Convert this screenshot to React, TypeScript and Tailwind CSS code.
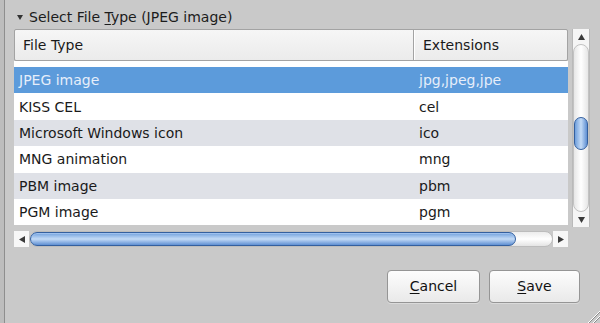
import React from 'react'

const rows: { name: string; ext: string }[] = [
  { name: 'JPEG image', ext: 'jpg,jpeg,jpe' },
  { name: 'KISS CEL', ext: 'cel' },
  { name: 'Microsoft Windows icon', ext: 'ico' },
  { name: 'MNG animation', ext: 'mng' },
  { name: 'PBM image', ext: 'pbm' },
  { name: 'PGM image', ext: 'pgm' },
]

function Arrow({ dir }: { dir: 'up' | 'down' | 'left' | 'right' }) {
  const pts = {
    up: '0,6 3.5,0 7,6',
    down: '0,0 3.5,6 7,0',
    left: '6,0 0,3.5 6,7',
    right: '0,0 6,3.5 0,7',
  }[dir]
  const horiz = dir === 'left' || dir === 'right'
  return (
    <svg width={horiz ? 6 : 7} height={horiz ? 7 : 6} viewBox={horiz ? '0 0 6 7' : '0 0 7 6'}>
      <polygon points={pts} fill="#3a3a3a" />
    </svg>
  )
}

function Button({ mnemonic, rest, width }: { mnemonic: string; rest: string; width: string }) {
  return (
    <button
      className={`${width} h-[33px] rounded-[4px] border border-[#959595] bg-gradient-to-b from-[#fdfdfd] to-[#e9e9e9] shadow-[0_1px_0_#dadada] text-[14px] text-[#111] flex items-center justify-center`}
    >
      <span className="underline underline-offset-2">{mnemonic}</span>
      {rest}
    </button>
  )
}

export default function App() {
  return (
    <div className="w-[600px] h-[323px] bg-[#c9c9c9] flex overflow-hidden relative font-['DejaVu_Sans',sans-serif] text-[14px] text-[#1a1a1a]">
      <div className="w-[4px] bg-[#bdbdbd]" />
      <div className="w-px bg-[#8e8e8e]" />
      <div className="flex-1 flex flex-col pl-[9px] pt-[8px]">
        {/* expander */}
        <div className="h-[18px] flex items-center pl-[3px]">
          <svg width="6" height="5" viewBox="0 0 6 5">
            <polygon points="0,0 6,0 3,5" fill="#333" />
          </svg>
          <span className="ml-[6px] text-[#1c1c1c]">
            Select File <span className="underline underline-offset-2">T</span>ype (JPEG image)
          </span>
        </div>

        <div className="flex items-start mt-[3px]">
          {/* table */}
          <div className="w-[554px] flex flex-col">
            <div className="h-[32px] flex border border-[#a3a3a3] rounded-[2px] bg-gradient-to-b from-[#f6f6f6] to-[#ebebeb]">
              <div className="w-[399px] flex items-center pl-[8px] border-r border-[#a3a3a3]">File Type</div>
              <div className="flex-1 flex items-center pl-[8px] border-l border-white">Extensions</div>
            </div>
            <div className="bg-white pt-[6px]">
              {rows.map((r, i) => (
                <div
                  key={r.name}
                  className={`h-[26.4px] flex items-center pt-px ${
                    i === 0 ? 'bg-[#5c9bdb] text-[#e6eefa]' : i % 2 === 0 ? 'bg-[#dfe1e7]' : 'bg-white'
                  }`}
                >
                  <div className="w-[400px] pl-[5px]">{r.name}</div>
                  <div className="flex-1 pl-[5px]">{r.ext}</div>
                </div>
              ))}
            </div>
            {/* horizontal scrollbar */}
            <div className="mt-[6px] h-[16px] flex items-stretch">
              <div className="w-[15px] bg-[#f7f7f7] flex items-center justify-center">
                <Arrow dir="left" />
              </div>
              <div className="flex-1 flex items-stretch rounded-full border border-[#bcbcbc] bg-gradient-to-b from-[#ececec] via-white to-[#e4e4e4]">
                <div className="w-[486px] rounded-full border border-[#34609f] bg-gradient-to-b from-[#6f9fdc] via-[#c4dbf6] to-[#5f8fd2] shadow-[inset_0_1px_0_#9fc1ee]" />
              </div>
              <div className="w-[15px] bg-[#f7f7f7] flex items-center justify-center">
                <Arrow dir="right" />
              </div>
            </div>
          </div>

          {/* vertical scrollbar */}
          <div className="ml-[4px] w-[18px] h-[198px] flex flex-col bg-[#f5f5f5] border-x border-[#b9b9b9]">
            <div className="h-[15px] flex items-center justify-center">
              <Arrow dir="up" />
            </div>
            <div className="flex-1 flex flex-col rounded-full border border-[#c2c2c2] bg-gradient-to-r from-[#e6e6e6] via-white to-[#e6e6e6]">
              <div className="mt-[72px] h-[33px] rounded-full border border-[#34609f] bg-gradient-to-r from-[#6f9fdc] via-[#c4dbf6] to-[#5f8fd2]" />
            </div>
            <div className="h-[15px] flex items-center justify-center">
              <Arrow dir="down" />
            </div>
          </div>
        </div>

        {/* buttons */}
        <div className="mt-[23px] flex justify-end gap-[9px] pr-[20px]">
          <Button mnemonic="C" rest="ancel" width="w-[93px]" />
          <Button mnemonic="S" rest="ave" width="w-[91px]" />
        </div>
      </div>

      {/* resize grip */}
      <svg className="absolute right-0 bottom-0" width="15" height="15" viewBox="0 0 15 15">
        <line x1="3" y1="15" x2="15" y2="3" stroke="#ffffff" strokeWidth="1" />
        <line x1="4" y1="15" x2="15" y2="4" stroke="#8a8a8a" strokeWidth="1" />
        <line x1="8" y1="15" x2="15" y2="8" stroke="#ffffff" strokeWidth="1" />
        <line x1="9" y1="15" x2="15" y2="9" stroke="#8a8a8a" strokeWidth="1" />
      </svg>
    </div>
  )
}
